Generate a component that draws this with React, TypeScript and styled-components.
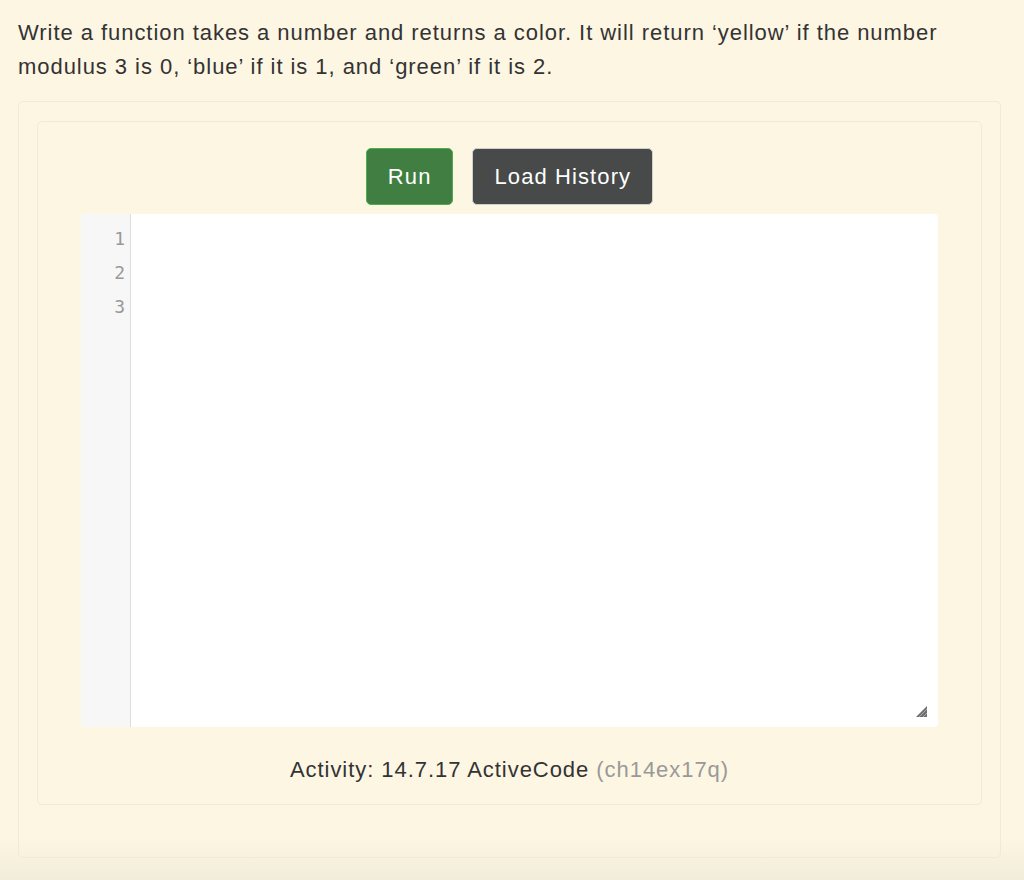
import React from "react";
import styled, { createGlobalStyle } from "styled-components";

const GlobalStyle = createGlobalStyle`
  html, body {
    margin: 0;
    padding: 0;
    min-height: 100%;
  }

  body {
    height: 880px;
    background: linear-gradient(
      to bottom,
      #fdf6e3 0,
      #fdf6e3 838px,
      #f2ecda 880px
    );
    font-family: "Liberation Sans", Arial, sans-serif;
    color: #333;
  }
`;

const Page = styled.div`
  padding: 16px 23px 0 18px;
`;

const Prompt = styled.p`
  margin: 0;
  font-size: 22px;
  letter-spacing: 0.95px;
  line-height: 34px;
  color: #333;
`;

const Well = styled.div`
  margin-top: 17px;
  padding: 19px 18px 52px 18px;
  border: 1px solid #f4ead0;
  border-radius: 5px;
  background: transparent;
`;

const Card = styled.div`
  border: 1px solid #f4ead0;
  border-radius: 5px;
  padding: 26px 43px 0 43px;
  height: 656px;
  display: flex;
  flex-direction: column;
  align-items: center;
`;

const Toolbar = styled.div`
  display: flex;
  gap: 19px;
  justify-content: center;
`;

const Button = styled.button<{ $variant: "run" | "history" }>`
  height: 57px;
  padding: 0 21px;
  border-radius: 5px;
  font-family: "Liberation Sans", Arial, sans-serif;
  font-size: 22px;
  letter-spacing: 1.1px;
  color: #fff;
  cursor: pointer;
  border: 1px solid
    ${({ $variant }) => ($variant === "run" ? "#4cae4c" : "#cfcfcf")};
  background: ${({ $variant }) => ($variant === "run" ? "#417e42" : "#484a49")};
`;

const Editor = styled.div`
  position: relative;
  margin-top: 9px;
  width: 857px;
  height: 513px;
  display: flex;
  background: #fff;
  border-radius: 4px;
  overflow: hidden;
`;

const Gutter = styled.div`
  width: 50px;
  box-sizing: border-box;
  background: #f7f7f7;
  border-right: 1px solid #dddddd;
  padding-top: 8px;
`;

const LineNumber = styled.div`
  height: 34px;
  line-height: 34px;
  text-align: right;
  padding-right: 5px;
  font-family: "DejaVu Sans Mono", monospace;
  font-size: 18px;
  color: #999;
`;

const Code = styled.div`
  flex: 1;
`;

const Grip = styled.svg`
  position: absolute;
  right: 10px;
  bottom: 9px;
`;

const Caption = styled.div`
  margin-top: 28px;
  font-size: 22px;
  letter-spacing: 0.95px;
  line-height: 30px;
  color: #333;
`;

const Muted = styled.span`
  color: #999;
`;

function ResizeGrip() {
  return (
    <Grip width="13" height="13" viewBox="0 0 13 13">
      <path d="M12 1 L1 12 L12 12 Z" fill="#6f6f6f" />
      <path d="M4 12 L12 4 M8 12 L12 8" stroke="#bbb" strokeWidth="0.8" />
    </Grip>
  );
}

export default function App() {
  return (
    <>
      <GlobalStyle />
      <Page>
        <Prompt>
          Write a function takes a number and returns a color. It will return
          ‘yellow’ if the number modulus 3 is 0, ‘blue’ if it is 1, and
          ‘green’ if it is 2.
        </Prompt>
        <Well>
          <Card>
            <Toolbar>
              <Button $variant="run">Run</Button>
              <Button $variant="history">Load History</Button>
            </Toolbar>
            <Editor>
              <Gutter>
                {[1, 2, 3].map((n) => (
                  <LineNumber key={n}>{n}</LineNumber>
                ))}
              </Gutter>
              <Code />
              <ResizeGrip />
            </Editor>
            <Caption>
              Activity: 14.7.17 ActiveCode <Muted>(ch14ex17q)</Muted>
            </Caption>
          </Card>
        </Well>
      </Page>
    </>
  );
}
